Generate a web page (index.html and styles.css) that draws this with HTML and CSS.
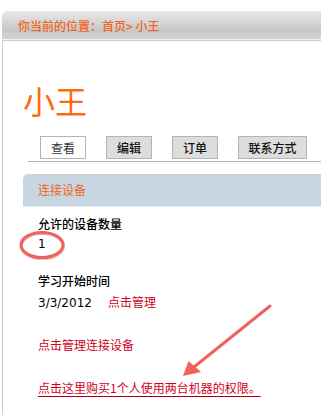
FILE: index.html
```html
<!DOCTYPE html>
<html lang="zh">
<head>
<meta charset="utf-8">
<title>小王</title>
<link rel="stylesheet" href="styles.css">
</head>
<body>
<div class="page">
  <div class="crumb">你当前的位置：首页&gt; 小王</div>
  <div class="content">
    <h1 class="title">小王</h1>
    <div class="tabs">
      <span class="tab active">查看</span>
      <span class="tab">编辑</span>
      <span class="tab">订单</span>
      <span class="tab wide">联系方式</span>
    </div>
    <div class="section">
      <div class="section-head">连接设备</div>
      <div class="section-body">
        <div class="label first">允许的设备数量</div>
        <div class="value">1</div>
        <div class="label gap">学习开始时间</div>
        <div class="value tight"><span class="date">3/3/2012</span><a class="link plain" href="#">点击管理</a></div>
        <div class="value big"><a class="link plain" href="#">点击管理连接设备</a></div>
        <div class="value big"><a class="link under" href="#">点击这里购买1个人使用两台机器的权限。</a></div>
      </div>
    </div>
  </div>
</div>
<svg class="marks" width="321" height="415" viewBox="0 0 321 415">
  <ellipse cx="42.5" cy="246" rx="21" ry="12.5" fill="none" stroke="#b04a44" stroke-opacity="0.35" stroke-width="3"/>
  <ellipse cx="42" cy="245" rx="21" ry="12.5" fill="none" stroke="#f0625a" stroke-width="3"/>
  <line x1="270" y1="306" x2="194" y2="367" stroke="#f0625a" stroke-width="3" stroke-linecap="round"/>
  <polygon points="183,376 188.5,361 201,372" fill="#f0625a"/>
</svg>
</body>
</html>
```
FILE: styles.css
```css
html, body {
  margin: 0;
  padding: 0;
  background: #fff;
}
body {
  width: 321px;
  height: 415px;
  overflow: hidden;
  position: relative;
  font-family: "DejaVu Sans", "Noto Sans CJK SC", sans-serif;
  font-size: 12px;
  color: #000;
}
.page {
  padding-top: 11px;
  padding-left: 2px;
}
.crumb {
  height: 29px;
  line-height: 29px;
  padding-left: 16px;
  border-top-left-radius: 5px;
  background: linear-gradient(#e9e9e9 0%, #d2d2d2 45%, #c7c7c7 65%, #d6d6d6 100%);
  border-bottom: 1px solid #cdcdcd;
  box-shadow: inset 0 -1px 0 #f2f2f2;
  color: #f26522;
  font-family: "Noto Sans CJK SC", sans-serif;
  font-weight: 500;
  font-size: 12px;
}
.content {
  border-left: 1px solid #cccccc;
  height: 380px;
}
.title {
  margin: 0;
  padding: 43px 0 0 20px;
  font-family: "Noto Sans CJK SC", sans-serif;
  font-weight: normal;
  font-size: 32px;
  line-height: 32px;
  color: #ff6a10;
}
.tabs {
  display: flex;
  gap: 20px;
  margin: 20px 0 0 25px;
  padding: 0 0 2px 12px;
  border-bottom: 1px solid #b8b8b8;
}
.tab {
  width: 44px;
  height: 21px;
  line-height: 21px;
  text-align: center;
  border: 1px solid #b4b4b4;
  background: #dddddd;
  font-family: "Noto Sans CJK SC", sans-serif;
  font-weight: 500;
  font-size: 12px;
  color: #111;
}
.tab.wide {
  width: 67px;
}
.tab.active {
  background: #fff;
  font-weight: normal;
  color: #333;
}
.section {
  margin: 12px 0 0 20px;
}
.section-head {
  height: 32px;
  line-height: 32px;
  padding-left: 15px;
  background: #c7d6e0;
  border-top-left-radius: 5px;
  border-bottom: 1px solid #e4ebf0;
  font-family: "Noto Sans CJK SC", sans-serif;
  font-size: 12px;
  color: #f26522;
}
.section-body {
  padding-left: 15px;
}
.label {
  line-height: 20px;
  font-family: "Noto Sans CJK SC", sans-serif;
  font-weight: 500;
}
.label.first {
  margin-top: 7px;
}
.label.gap {
  margin-top: 17px;
}
.value {
  line-height: 20px;
}
.value.tight {
  margin-top: 1px;
}
.value.big {
  margin-top: 22px;
}
.date {
  display: inline-block;
  width: 70px;
}
.link {
  color: #d0021b;
  font-family: "Noto Sans CJK SC", sans-serif;
}
.link.plain {
  text-decoration: none;
}
.link.under {
  text-decoration: underline;
  text-decoration-color: #a00010;
  text-underline-offset: 3px;
}
.marks {
  position: absolute;
  left: 0;
  top: 0;
  pointer-events: none;
}
```
